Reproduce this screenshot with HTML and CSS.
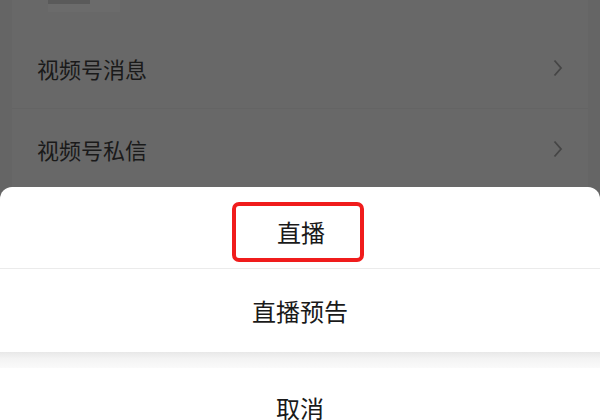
FILE: index.html
```html
<!DOCTYPE html>
<html lang="zh">
<head>
<meta charset="utf-8">
<link rel="stylesheet" href="styles.css">
</head>
<body>
<div class="screen">
  <div class="page">
    <div class="thumb"><div class="thumb-inner"></div></div>
    <div class="row"><span class="label">视频号消息</span>
      <svg class="chev" width="12" height="20" viewBox="0 0 12 20"><path d="M2.5 2.5 L9 10 L2.5 17.5" fill="none" stroke="#454545" stroke-width="1.8"/></svg>
    </div>
    <div class="row"><span class="label">视频号私信</span>
      <svg class="chev" width="12" height="20" viewBox="0 0 12 20"><path d="M2.5 2.5 L9 10 L2.5 17.5" fill="none" stroke="#454545" stroke-width="1.8"/></svg>
    </div>
  </div>
  <div class="sheet">
    <div class="item first"><span class="boxed">直播</span></div>
    <div class="item second">直播预告</div>
    <div class="gap"></div>
    <div class="item cancel">取消</div>
  </div>
</div>
</body>
</html>
```
FILE: styles.css
```css
html, body {
  margin: 0;
  padding: 0;
}
body {
  width: 600px;
  height: 420px;
  overflow: hidden;
  background: #656565;
  font-family: "Noto Sans CJK SC", "Noto Sans", sans-serif;
}
.screen {
  display: flex;
  flex-direction: column;
  height: 420px;
  overflow: hidden;
}
.page {
  flex-shrink: 0;
  height: 187px;
  overflow: hidden;
  margin: 0 12px;
  background: #686868;
  display: flex;
  flex-direction: column;
}
.thumb {
  flex-shrink: 0;
  margin-left: 36px;
  width: 72px;
  height: 12px;
  margin-bottom: 16px;
  background: #6b6b6b;
}
.thumb-inner {
  width: 42px;
  height: 4px;
  background: #5a5a5a;
}
.row {
  flex-shrink: 0;
  height: 80px;
  display: flex;
  align-items: center;
  justify-content: space-between;
  padding: 0 24px 0 25px;
  border-bottom: 1px solid #646464;
}
.label {
  font-size: 22px;
  color: #1a1a1a;
}
.chev {
  display: block;
}
.sheet {
  flex-shrink: 0;
  height: 233px;
  background: #fff;
  border-radius: 12px 12px 0 0;
  display: flex;
  flex-direction: column;
  color: #1a1a1a;
  font-size: 24px;
}
.item {
  flex-shrink: 0;
  display: flex;
  align-items: center;
  justify-content: center;
}
.first {
  height: 82px;
  padding-top: 8px;
  box-sizing: border-box;
  border-bottom: 1px solid #ebebeb;
}
.boxed {
  box-sizing: border-box;
  width: 132px;
  height: 60px;
  padding-left: 6px;
  border: 4px solid #f01c1c;
  border-radius: 7px;
  display: flex;
  align-items: center;
  justify-content: center;
  margin-left: -4px;
}
.second {
  height: 83px;
}
.gap {
  flex-shrink: 0;
  height: 16px;
  background: linear-gradient(#e8e8e8, #f3f3f3 40%, #fafafa);
}
.cancel {
  height: 80px;
  align-items: flex-start;
  padding-top: 22px;
  box-sizing: border-box;
}
```
